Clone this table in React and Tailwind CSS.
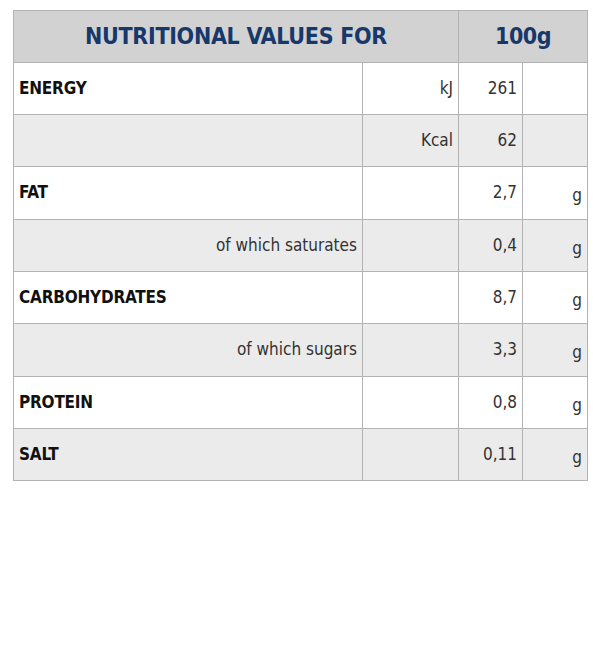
const rows = [
  { label: "ENERGY", bold: true, unit: "kJ", value: "261", g: "" },
  { label: "", unit: "Kcal", value: "62", g: "" },
  { label: "FAT", bold: true, unit: "", value: "2,7", g: "g", tall: true },
  { label: "of which saturates", sub: true, unit: "", value: "0,4", g: "g" },
  { label: "CARBOHYDRATES", bold: true, unit: "", value: "8,7", g: "g" },
  { label: "of which sugars", sub: true, unit: "", value: "3,3", g: "g", tall: true },
  { label: "PROTEIN", bold: true, unit: "", value: "0,8", g: "g" },
  { label: "SALT", bold: true, unit: "", value: "0,11", g: "g" },
];

const App = () => {
  return (
    <div
      className="w-[600px] h-[645px] bg-white pt-[10px] pl-[13px]"
      style={{ fontFamily: '"DejaVu Sans Condensed", Roboto, sans-serif' }}
    >
      <table className="w-[575px] border-collapse border border-[#b3b3b3] text-[#111]">
        <thead>
          <tr className="h-[52px] bg-[#d2d2d2]">
            <th
              colSpan={2}
              className="border border-[#b3b3b3] text-center text-[23px] font-bold text-[#17386b] tracking-[-0.3px]"
            >
              NUTRITIONAL VALUES FOR
            </th>
            <th
              colSpan={2}
              className="border border-[#b3b3b3] text-center text-[23px] font-bold text-[#17386b] tracking-[-0.5px]"
            >
              100g
            </th>
          </tr>
        </thead>
        <tbody>
          {rows.map((r, i) => (
            <tr
              key={i}
              className={(r.tall ? "h-[53px] " : "h-[52px] ") + (i % 2 ? "bg-[#ebebeb]" : "bg-white")}
            >
              <td
                className={
                  "w-[349px] border border-[#b3b3b3] px-[5px] text-[17px] " +
                  (r.sub ? "text-right text-[#333]" : "text-left font-bold tracking-[-0.2px]")
                }
              >
                {r.label}
              </td>
              <td className="w-[96px] border border-[#b3b3b3] px-[5px] text-right text-[17px] text-[#333]">
                {r.unit}
              </td>
              <td className="w-[64px] border border-[#b3b3b3] px-[5px] text-right text-[17px] text-[#333]">
                {r.value}
              </td>
              <td className="w-[65px] border border-[#b3b3b3] px-[5px] pt-[6px] text-right text-[17px] text-[#333]">
                {r.g}
              </td>
            </tr>
          ))}
        </tbody>
      </table>
    </div>
  );
};

export default App;
